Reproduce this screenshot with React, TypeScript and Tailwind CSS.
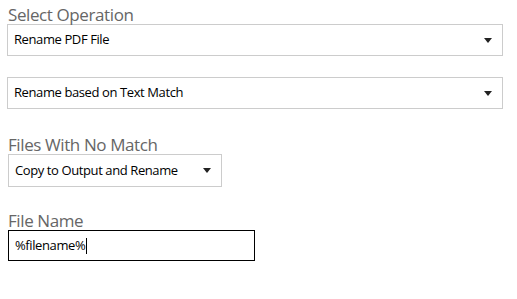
const font = { fontFamily: '"Open Sans", "Noto Sans", sans-serif' }

function Caret() {
  return (
    <svg width="8" height="5" viewBox="0 0 8 5" className="shrink-0">
      <path d="M0 0 L8 0 L4 5 Z" fill="#222" />
    </svg>
  )
}

function Select({ value, className }: { value: string; className: string }) {
  return (
    <div
      className={`flex items-center justify-between border border-[#cccccc] bg-white pl-[6px] pr-[10px] text-[13px] tracking-[-0.4px] text-black ${className}`}
    >
      <span>{value}</span>
      <Caret />
    </div>
  )
}

function Label({ children, className = '' }: { children: string; className?: string }) {
  return (
    <div className={`text-[17px] leading-[18px] tracking-[-0.4px] text-[#666666] ${className}`}>{children}</div>
  )
}

export default function App() {
  return (
    <div className="w-[517px] h-[299px] bg-white px-[7px] pt-[6px]" style={font}>
      <Label className="ml-[1px]">Select Operation</Label>
      <Select value="Rename PDF File" className="w-[496px] h-[32px]" />
      <Select value="Rename based on Text Match" className="w-[496px] h-[32px] mt-[21px]" />

      <Label className="ml-[1px] mt-[27px]">Files With No Match</Label>
      <Select value="Copy to Output and Rename" className="w-[214px] h-[33px] ml-[1px] pr-[9px]" />

      <Label className="ml-[1px] mt-[25px]">File Name</Label>
      <div className="ml-[1px] flex h-[31px] w-[247px] items-center border border-black pl-[6px] text-[13px] tracking-[-0.4px] text-black">
        <span>%filename%</span>
        <span className="ml-[1px] h-[16px] w-[1px] bg-black" />
      </div>
    </div>
  )
}
